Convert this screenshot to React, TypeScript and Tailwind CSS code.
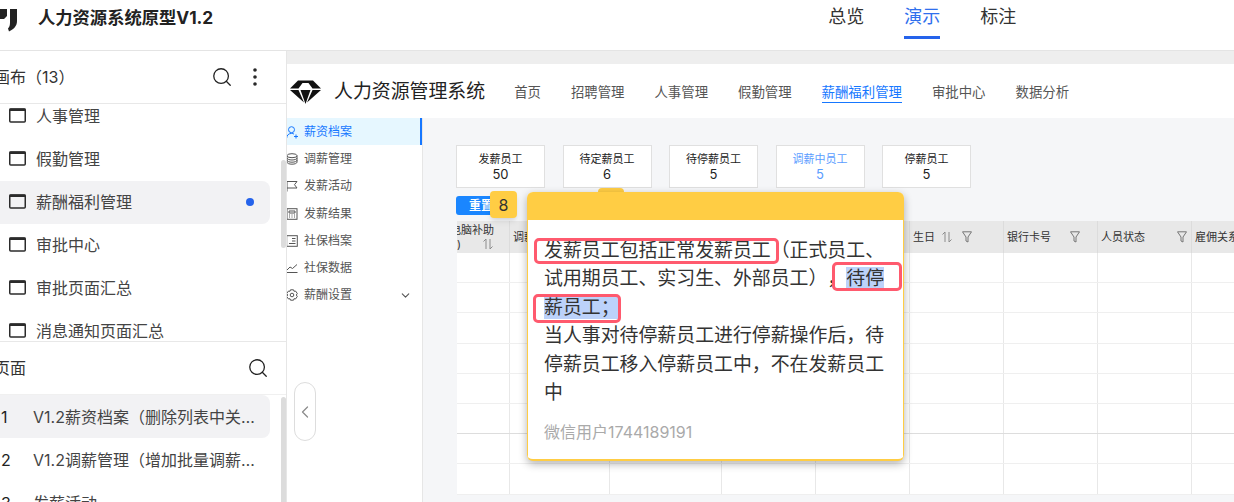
import { ChevronDown, ChevronLeft, EllipsisVertical, Search } from 'lucide-react';
import type { ReactNode } from 'react';

const font = "font-['Inter','Noto_Sans_CJK_SC',sans-serif]";

const canvases = ['人事管理', '假勤管理', '薪酬福利管理', '审批中心', '审批页面汇总', '消息通知页面汇总'];
const navItems = ['首页', '招聘管理', '人事管理', '假勤管理', '薪酬福利管理', '审批中心', '数据分析'];
const stats = [
  { label: '发薪员工', value: '50' },
  { label: '待定薪员工', value: '6' },
  { label: '待停薪员工', value: '5' },
  { label: '调薪中员工', value: '5', active: true },
  { label: '停薪员工', value: '5' },
];

const WindowIcon = () => (
  <svg width="17" height="15" viewBox="0 0 17 15" fill="none" className="shrink-0 text-[#2b2b2b]">
    <rect x="0.75" y="1" width="15.5" height="13" rx="1" stroke="currentColor" strokeWidth="1.5" />
    <rect x="0.5" y="0.5" width="16" height="2.5" fill="currentColor" />
  </svg>
);

const SortIcon = () => (
  <svg width="12" height="12" viewBox="0 0 12 12" fill="none" stroke="#8c8c8c" strokeWidth="1">
    <path d="M4 11V1L1.5 3.5M8 1v10l2.5-2.5" />
  </svg>
);

const FilterIcon = () => (
  <svg width="10" height="12" viewBox="0 0 10 12" fill="none" stroke="#777" strokeWidth="1">
    <path d="M.5.8h9L6 6v5L4 10V6z" />
  </svg>
);

const sideItems: { label: string; icon: ReactNode }[] = [
  {
    label: '薪资档案',
    icon: (
      <svg viewBox="0 0 12 13" fill="none" stroke="currentColor" strokeWidth="1">
        <circle cx="5.5" cy="3.7" r="3" />
        <path d="M.7 12c0-2.7 2-4.6 4.8-4.6 1 0 1.8.2 2.5.7M8 10.5h4M10 8.5v4" />
      </svg>
    ),
  },
  {
    label: '调薪管理',
    icon: (
      <svg viewBox="0 0 12 12" fill="none" stroke="currentColor" strokeWidth="1">
        <ellipse cx="6" cy="2.7" rx="5" ry="2" />
        <path d="M1 2.7v6.5c0 1.1 2.2 2 5 2s5-.9 5-2V2.7M1 5c0 1.1 2.2 2 5 2s5-.9 5-2M1 7.2c0 1.1 2.2 2 5 2s5-.9 5-2" />
      </svg>
    ),
  },
  {
    label: '发薪活动',
    icon: (
      <svg viewBox="0 0 12 12" fill="none" stroke="currentColor" strokeWidth="1">
        <path d="M1 11.5V1.5h10L8.5 4.7 11 8H1" />
      </svg>
    ),
  },
  {
    label: '发薪结果',
    icon: (
      <svg viewBox="0 0 12 12" fill="none" stroke="currentColor" strokeWidth="1">
        <rect x="1" y=".7" width="10" height="10.6" />
        <path d="M3 3h6v2H3zM3 7h1M5.5 7h1M8 7h1M3 9h1M5.5 9h1M8 9h1" />
      </svg>
    ),
  },
  {
    label: '社保档案',
    icon: (
      <svg viewBox="0 0 12 12" fill="none" stroke="currentColor" strokeWidth="1">
        <rect x=".7" y=".7" width="10.6" height="10.6" />
        <path d="M6 3.5h3.5M6 6h3.5M3 8.5h6.5" />
      </svg>
    ),
  },
  {
    label: '社保数据',
    icon: (
      <svg viewBox="0 0 12 12" fill="none" stroke="currentColor" strokeWidth="1">
        <path d="M.5 10.5h11M1 8l3-3 2.5 1.5L11 2.5" />
      </svg>
    ),
  },
  {
    label: '薪酬设置',
    icon: (
      <svg viewBox="0 0 12 12" fill="none" stroke="currentColor" strokeWidth="1">
        <path d="M4.5.8h3l.5 1.5 1.5-.3L11.3 4.5 10.3 6l1 1.5L9.5 10 8 9.7l-.5 1.5h-3L4 9.7 2.5 10 .7 7.5 1.7 6 .7 4.5 2.500 2l1.500.3z" />
        <circle cx="6" cy="6" r="1.8" />
      </svg>
    ),
  },
];

const columns = [53, 100, 112, 94, 94, 94, 94, 94, 60];
const rowCount = 8;

const HeaderCell = ({ children, width }: { children?: ReactNode; width: number }) => (
  <div
    className="flex h-full shrink-0 items-center overflow-hidden border-r border-[#dcdcdc] pl-[3px] text-[11px] text-[#333]"
    style={{ width }}
  >
    {children}
  </div>
);

const Sidebar = () => (
  <aside className="flex w-[287px] shrink-0 flex-col overflow-hidden border-r border-[#e6e6e6] bg-white">
    <div className="flex h-[53px] shrink-0 items-center justify-between border-b border-[#e8e8e8] pr-[19px]">
      <span className="-ml-[6px] text-[16px] text-[#333]">画布（13）</span>
      <div className="flex items-center gap-[10px]">
        <Search size={22} strokeWidth={1.4} className="text-[#222]" />
        <EllipsisVertical size={24} strokeWidth={1.6} className="text-[#222]" />
      </div>
    </div>
    <div className="relative h-[238px] shrink-0 overflow-hidden border-b border-[#e8e8e8]">
      <div className="-mt-[9px]">
        {canvases.map((name) => {
          const active = name === '薪酬福利管理';
          return (
            <div
              key={name}
              className={`mr-[16px] flex h-[43px] items-center gap-[10px] rounded-r-lg pb-[2px] pl-[9px] text-[16px] text-[#444] ${
                active ? 'bg-[#f2f2f4]' : ''
              }`}
            >
              <WindowIcon />
              <span className="flex-1">{name}</span>
              {active && <span className="mr-4 h-2 w-2 rounded-full bg-[#2563eb]" />}
            </div>
          );
        })}
      </div>
      <div className="absolute top-[56px] right-0 h-[88px] w-[5px] rounded-sm bg-[#dcdcdc]" />
    </div>
    <div className="flex h-[53px] shrink-0 items-center justify-between border-b border-[#f0f0f0] pr-[17px]">
      <span className="-ml-[6px] text-[16px] text-[#333]">页面</span>
      <Search size={22} strokeWidth={1.4} className="text-[#222]" />
    </div>
    <div className="relative flex-1 overflow-hidden">
      {['V1.2薪资档案（删除列表中关联字段）', 'V1.2调薪管理（增加批量调薪功能说明）', '发薪活动'].map((name, i) => (
        <div
          key={name}
          className={`mr-[16px] flex h-[43px] items-center rounded-r-lg text-[16px] text-[#444] ${
            i === 0 ? 'bg-[#f2f2f4]' : ''
          }`}
        >
          <span className="w-[33px] shrink-0 pl-[1px] text-[#222]">{i + 1}</span>
          <span className="truncate pr-[10px]">{name}</span>
        </div>
      ))}
      <div className="absolute top-[2px] right-0 h-[110px] w-[5px] rounded-sm bg-[#dcdcdc]" />
    </div>
  </aside>
);

const Prototype = () => (
  <div className="relative flex-1 overflow-hidden bg-[#eeeeee] pt-[13px]">
    <div className="flex h-[54px] items-center bg-white pt-[2px] pl-[3px]">
      <svg width="31" height="24" viewBox="0 0 31 24" className="shrink-0">
        <path d="M8 .5h15L31 8.500H22.500L18.500 3h-6L8.500 8.500H0z" fill="#111" />
        <path d="M0 10h8.500l5.500 12.500zM31 10h-8.500L17 22.500zM10.500 10h10L15.500 24z" fill="#111" />
      </svg>
      <span className="ml-[13px] text-[18.9px] text-[#222]">人力资源管理系统</span>
      <nav className="ml-[29px] flex gap-[30px] text-[13.4px] text-[#555]">
        {navItems.map((item) => (
          <span
            key={item}
            className={item === '薪酬福利管理' ? 'border-b border-[#1677ff] leading-[20px] text-[#1677ff]' : 'leading-[20px]'}
          >
            {item}
          </span>
        ))}
      </nav>
    </div>
    <div className="flex h-[384px]">
      <div className="w-[136px] shrink-0 overflow-hidden border-r border-[#e6e6e6] bg-white">
        {sideItems.map((item, i) => (
          <div
            key={item.label}
            className={`flex h-[27.2px] items-center gap-[6px] pt-[1px] text-[12px] ${
              i === 0 ? 'border-r-2 border-[#1677ff] bg-[#e6f7ff] text-[#1677ff]' : 'text-[#555]'
            }`}
          >
            <span className="-ml-[1px] h-3 w-3 shrink-0">{item.icon}</span>
            <span>{item.label}</span>
            {i === 6 && <ChevronDown size={13} strokeWidth={2} className="ml-[41px]" />}
          </div>
        ))}
      </div>
      <main className="flex-1 overflow-hidden bg-[#f5f6f8] pt-[27px] pl-[33px]">
        <div className="flex gap-[17.5px]">
          {stats.map((s) => (
            <div
              key={s.label}
              className={`flex h-[43px] w-[89px] flex-col items-center justify-center border-[1.5px] border-[#e0e0e0] bg-white leading-[15px] ${
                s.active ? 'text-[#5b9dff]' : 'text-[#222]'
              }`}
            >
              <span className="text-[11px]">{s.label}</span>
              <span className="text-[13px]">{s.value}</span>
            </div>
          ))}
        </div>
        <div className="mt-[8px] h-[19px] w-[50px] rounded-[3px] bg-[#1a86ff] pl-[13px] text-[12px] leading-[19px] font-bold text-white">
          重置
        </div>
        <div className="mt-[6px] ml-[1px] w-[900px]">
          <div className="flex h-[32px] bg-[#e8e8e8]">
            <HeaderCell width={columns[0]}>
              <div className="-ml-[10px] w-[52px] shrink-0 leading-[14px]">
                <div className="whitespace-nowrap">电脑补助</div>
                <div className="flex items-center justify-between pr-[8px]">
                  <span className="ml-[7px]">)</span>
                  <SortIcon />
                </div>
              </div>
            </HeaderCell>
            <HeaderCell width={columns[1]}>调薪</HeaderCell>
            <HeaderCell width={columns[2]} />
            <HeaderCell width={columns[3]} />
            <HeaderCell width={columns[4]} />
            <HeaderCell width={columns[5]}>
              <span>生日</span>
              <span className="ml-[6px]"><SortIcon /></span>
              <span className="ml-[9px]"><FilterIcon /></span>
            </HeaderCell>
            <HeaderCell width={columns[6]}>
              <span className="flex-1">银行卡号</span>
              <span className="mr-[17px]"><FilterIcon /></span>
            </HeaderCell>
            <HeaderCell width={columns[7]}>
              <span className="flex-1">人员状态</span>
              <span className="mr-[4px]"><FilterIcon /></span>
            </HeaderCell>
            <HeaderCell width={columns[8]}>
              <span className="whitespace-nowrap">雇佣关系</span>
            </HeaderCell>
          </div>
          {Array.from({ length: rowCount }, (_, row) => (
            <div key={row} className={`flex h-[30.2px] border-b ${row === 5 ? 'border-[#dddddd]' : 'border-[#efefef]'} bg-white`}>
              {columns.map((w, col) => (
                <div key={col} className="h-full shrink-0 border-r border-[#e8e8e8]" style={{ width: w }} />
              ))}
            </div>
          ))}
        </div>
      </main>
    </div>

    {/* collapse handle */}
    <button className="absolute top-[331px] left-[7px] flex h-[59px] w-[22px] items-center justify-center rounded-full border border-[#dddddd] bg-white text-[#8c8c8c]">
      <ChevronLeft size={24} strokeWidth={1.5} />
    </button>

    {/* annotation number */}
    <div className="absolute top-[140px] left-[203px] flex h-[27px] w-[27px] items-center justify-center rounded-[4px] bg-[#ffcd44] text-[16px] text-[#333] shadow-md">
      8
    </div>
    <div className="absolute top-[137px] left-[311px] h-[6px] w-[26px] rounded-t-[4px] bg-[#ffcd44]" />

    {/* annotation card */}
    <div className="absolute top-[141px] left-[240px] w-[377px] overflow-hidden rounded-[6px] border-b-2 border-[#ffcd44] bg-white shadow-[0_3px_8px_rgba(0,0,0,0.3)]">
      <div className="h-[28px] bg-[#ffcd44]" />
      <div className="relative border-x border-[#ffcd44] pt-[17px] pr-[14px] pb-[15px] pl-[16px]">
        <p className="text-[18.9px] leading-[28.4px] text-[#333] [text-spacing-trim:space-all]">
          发薪员工包括正常发薪员工（正式员工、试用期员工、实习生、外部员工），<span className="bg-[#bcd2fa]">待停</span>
          <br />
          <span className="bg-[#bcd2fa]">薪员工；</span>
          <br />
          当人事对待停薪员工进行停薪操作后，待停薪员工移入停薪员工中，不在发薪员工中
        </p>
        <div className="mt-[13px] text-[16px] leading-[24px] text-[#aaaaaa]">微信用户1744189191</div>
        <div className="absolute top-[18px] left-[6px] h-[26px] w-[245px] rounded-[5px] border-[3px] border-[#ff5a6e]" />
        <div className="absolute top-[42px] left-[304px] h-[29px] w-[70px] rounded-[5px] border-[3px] border-[#ff5a6e]" />
        <div className="absolute top-[74px] left-[5px] h-[29px] w-[88px] rounded-[5px] border-[3px] border-[#ff5a6e]" />
      </div>
    </div>
  </div>
);

export default function App() {
  return (
    <div className={`flex h-[502px] w-[1234px] flex-col overflow-hidden bg-white ${font}`}>
      <header className="flex h-[51px] shrink-0 items-start border-b border-[#e4e4e4] bg-white">
        <svg width="19" height="24" viewBox="0 0 19 24" className="mt-[8px] shrink-0" fill="#222">
          <path d="M0 1h7v7l-3 3H0zM10 1h7v12c0 5-3 8-8 10.500l-1-3c1.500-1.500 2-3.500 2-6z" />
        </svg>
        <h1 className="mt-[6px] ml-[19px] text-[17.3px] leading-[24px] font-bold text-[#222]">人力资源系统原型V1.2</h1>
        <div className="ml-[615px] flex gap-[40px] text-[18px] leading-[34px] text-[#333]">
          <span>总览</span>
          <span className="h-[39px] border-b-[3px] border-[#2563eb] text-[#2f6fed]">演示</span>
          <span>标注</span>
        </div>
      </header>
      <div className="flex min-h-0 flex-1">
        <Sidebar />
        <Prototype />
      </div>
    </div>
  );
}
